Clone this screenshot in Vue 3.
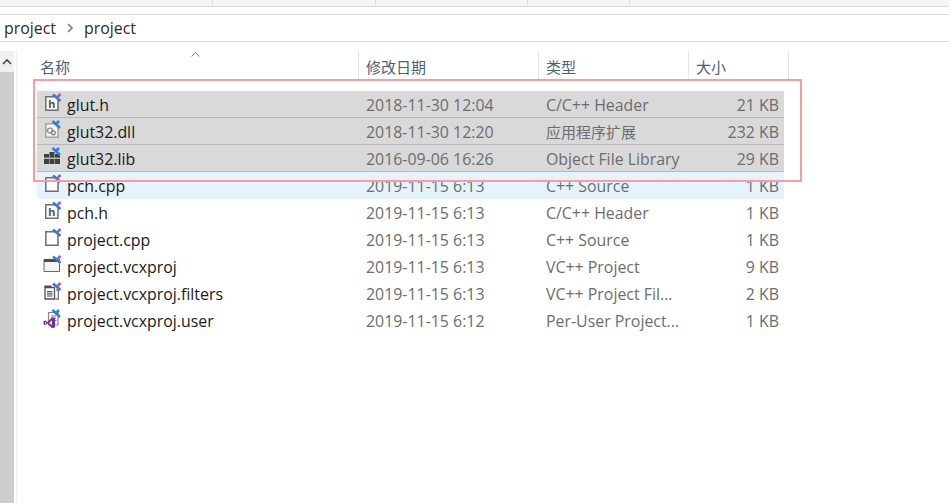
<script setup>
const ticks = [212, 375, 527, 629]
const rows = [
  { name: 'glut.h', date: '2018-11-30 12:04', type: 'C/C++ Header', size: '21 KB', icon: 'h', cls: 'sel' },
  { name: 'glut32.dll', date: '2018-11-30 12:20', type: '应用程序扩展', size: '232 KB', icon: 'dll', cls: 'sel', cjk: true },
  { name: 'glut32.lib', date: '2016-09-06 16:26', type: 'Object File Library', size: '29 KB', icon: 'lib', cls: 'sel' },
  { name: 'pch.cpp', date: '2019-11-15 6:13', type: 'C++ Source', size: '1 KB', icon: 'cpp', cls: 'hov' },
  { name: 'pch.h', date: '2019-11-15 6:13', type: 'C/C++ Header', size: '1 KB', icon: 'h', cls: '' },
  { name: 'project.cpp', date: '2019-11-15 6:13', type: 'C++ Source', size: '1 KB', icon: 'cpp', cls: '' },
  { name: 'project.vcxproj', date: '2019-11-15 6:13', type: 'VC++ Project', size: '9 KB', icon: 'proj', cls: '' },
  { name: 'project.vcxproj.filters', date: '2019-11-15 6:13', type: 'VC++ Project Fil...', size: '2 KB', icon: 'filters', cls: '' },
  { name: 'project.vcxproj.user', date: '2019-11-15 6:12', type: 'Per-User Project...', size: '1 KB', icon: 'user', cls: '' }
]
</script>

<template>
  <div class="page">
    <div class="strip">
      <i v-for="t in ticks" :key="t" class="tick" :style="{ left: t + 'px' }"></i>
    </div>
    <div class="crumbs">
      <span>project</span>
      <svg class="chev" width="8" height="10" viewBox="0 0 8 10"><path d="M2 1l4 4-4 4" fill="none" stroke="#7a7a7a" stroke-width="1.6" /></svg>
      <span>project</span>
    </div>
    <div class="body">
      <div class="scroll">
        <div class="up">
          <svg width="10" height="7" viewBox="0 0 10 7"><path d="M1 6l4-4 4 4" fill="none" stroke="#444" stroke-width="1.6" /></svg>
        </div>
        <div class="thumb"></div>
      </div>
      <div class="list">
        <div class="head">
          <div class="hc first">
            名称
            <svg class="caret" width="9" height="5" viewBox="0 0 9 5"><path d="M.5 4.500l4-4 4 4" fill="none" stroke="#8a8a8a" /></svg>
          </div>
          <div class="hc">修改日期</div>
          <div class="hc">类型</div>
          <div class="hc">大小</div>
        </div>
        <div class="rows">
          <div v-for="r in rows" :key="r.name" class="row" :class="r.cls">
            <svg class="ico" width="19" height="19" viewBox="0 0 19 19">
              <template v-if="r.icon === 'h'">
                <path d="M2.800 3.800h10.400l1.800 1.800v11.600h-12.200z" fill="#fbfbfb" stroke="#6f6f6f" stroke-width="1.500" />
                <text x="5.200" y="15" font-size="11.500" font-weight="700" font-family="Liberation Sans, sans-serif" fill="#4f4f4f">h</text>
              </template>
              <template v-else-if="r.icon === 'dll'">
                <path d="M2.800 3.800h10.400l1.800 1.800v11.600h-12.200z" fill="#f4f4f4" stroke="#a4a4a4" stroke-width="1.500" />
                <circle cx="7" cy="10.500" r="2.500" fill="none" stroke="#828282" stroke-width="1.200" />
                <circle cx="10.300" cy="12.800" r="2" fill="none" stroke="#828282" stroke-width="1.200" />
              </template>
              <template v-else-if="r.icon === 'lib'">
                <path d="M1 7h5v10h-5zM6.500 5h5v12h-5zM12 7h5v10h-5z" fill="#3f3f3f" />
                <path d="M1 10.500h16v1.500h-16z" fill="#b4b4b4" />
              </template>
              <template v-else-if="r.icon === 'cpp'">
                <path d="M2.800 3.800h10.400l1.800 1.800v11.600h-12.200z" fill="#fdfdfd" stroke="#6f6f6f" stroke-width="1.500" />
              </template>
              <template v-else-if="r.icon === 'proj'">
                <path d="M1 4.500h15.500v12h-15.500z" fill="#f5f5f5" stroke="#6a6a6a" />
                <path d="M1 4h15.500v3h-15.500z" fill="#4b4b4b" />
              </template>
              <template v-else-if="r.icon === 'filters'">
                <path d="M2 5.500h9.500v11.500h-9.500z" fill="#fbfbfb" stroke="#555" stroke-width="1.300" />
                <path d="M1.500 3.500h7v2.500h-7zM4 9h5.500v1.200h-5.500zM4 11.200h5.500v1.200h-5.500zM4 13.400h5.500v1.200h-5.500z" fill="#4d4d4d" />
                <path d="M13 8h2.300v9h-3" fill="none" stroke="#777" stroke-width="1.300" />
              </template>
              <template v-else>
                <path d="M5.500 3.500h9.500v12.500h-9.500z" fill="#fbfbfb" stroke="#8a8a8a" stroke-width="1.200" />
                <path d="M8 6.500h5v1.100h-5zM8 8.800h5v1.100h-5zM10.500 11h3v1.100h-3z" fill="#858585" />
                <path d="M.5 12.500l1.500-1.200 2.300 1.700 5-5 2.700 1.300v9l-2.700 1.200-5-5-2.300 1.700-1.500-1.200zM2 15l1.500-1-1.500-1zM9 11.500l-3 2.500 3 2.500z" fill="#7b2d9f" fill-rule="evenodd" />
              </template>
              <path v-if="r.icon === 'dll' || r.icon === 'lib' || r.icon === 'user'" d="M9.500 1l7.500 7M16 1l-3 3" fill="none" stroke="#2f7fd6" stroke-width="2.600" />
              <template v-else>
                <path d="M10 1.500l7.500 6.500" fill="none" stroke="#2f7fd6" stroke-width="2.600" />
                <path d="M14 4.500l3.500-3.500" fill="none" stroke="#a65cc2" stroke-width="2.600" />
              </template>
            </svg>
            <span class="name">{{ r.name }}</span>
            <span class="cell">{{ r.date }}</span>
            <span class="cell" :class="{ cjk: r.cjk }">{{ r.type }}</span>
            <span class="cell size">{{ r.size }}</span>
          </div>
        </div>
      </div>
    </div>
    <div class="mark"></div>
  </div>
</template>

<style scoped>
.page {
  position: relative;
  width: 949px;
  height: 503px;
  overflow: hidden;
  background: #fff;
  display: flex;
  flex-direction: column;
  font-family: "Open Sans", "Noto Sans CJK SC", sans-serif;
  font-size: 15.9px;
}
.strip {
  position: relative;
  height: 6px;
  flex: none;
  background: #f4f5f7;
  border-bottom: 1px solid #d9d9d9;
}
.tick {
  position: absolute;
  top: 0;
  width: 1px;
  height: 5px;
  background: #d9dadc;
}
.crumbs {
  flex: none;
  height: 26px;
  margin-top: 7px;
  padding-left: 4px;
  border-top: 1px solid #d9d9d9;
  border-bottom: 1px solid #d9d9d9;
  display: flex;
  align-items: center;
  gap: 10px;
  color: #2b2b2b;
}
.chev {
  flex: none;
}
.body {
  flex: 1;
  min-height: 0;
  margin-top: 9px;
  display: flex;
}
.scroll {
  flex: none;
  width: 14px;
  display: flex;
  flex-direction: column;
}
.up {
  height: 21px;
  flex: none;
  background: #f0f0f0;
  display: flex;
  align-items: center;
  justify-content: center;
}
.thumb {
  flex: 1;
  background: #cdcdcd;
}
.list {
  flex: 1;
  margin-left: 2px;
  border-left: 1px solid #f0f0f0;
}
.head {
  position: relative;
  display: grid;
  grid-template-columns: 327px 180px 150px 100px;
  margin-left: 15px;
  width: 757px;
  height: 31px;
  color: #4c607a;
  font-size: 15px;
}
.hc {
  position: relative;
  padding-left: 7px;
  padding-top: 6px;
  border-right: 1px solid #e5e5e5;
  line-height: 20px;
}
.first {
  padding-left: 8px;
}
.caret {
  position: absolute;
  top: 1px;
  left: 159px;
}
.rows {
  margin-top: 9px;
  margin-left: 20px;
  width: 747px;
}
.row {
  height: 27px;
  box-sizing: border-box;
  display: grid;
  grid-template-columns: 30px 299px 180px 150px 83px;
  align-items: start;
  color: #6d6d6d;
  line-height: 28px;
}
.row.sel {
  background: #d9d9d9;
  border-bottom: 1px solid #b8b8b8;
}
.row.hov {
  background: #e5f3ff;
}
.ico {
  justify-self: end;
  align-self: start;
  margin-right: 5px;
  margin-top: 2px;
}
.name {
  color: #1a1a1a;
}
.cjk {
  font-size: 15px;
}
.size {
  text-align: right;
}
.mark {
  position: absolute;
  left: 33px;
  top: 79px;
  width: 765px;
  height: 99px;
  border: 2px solid #ff9a9a;
  pointer-events: none;
}
</style>
